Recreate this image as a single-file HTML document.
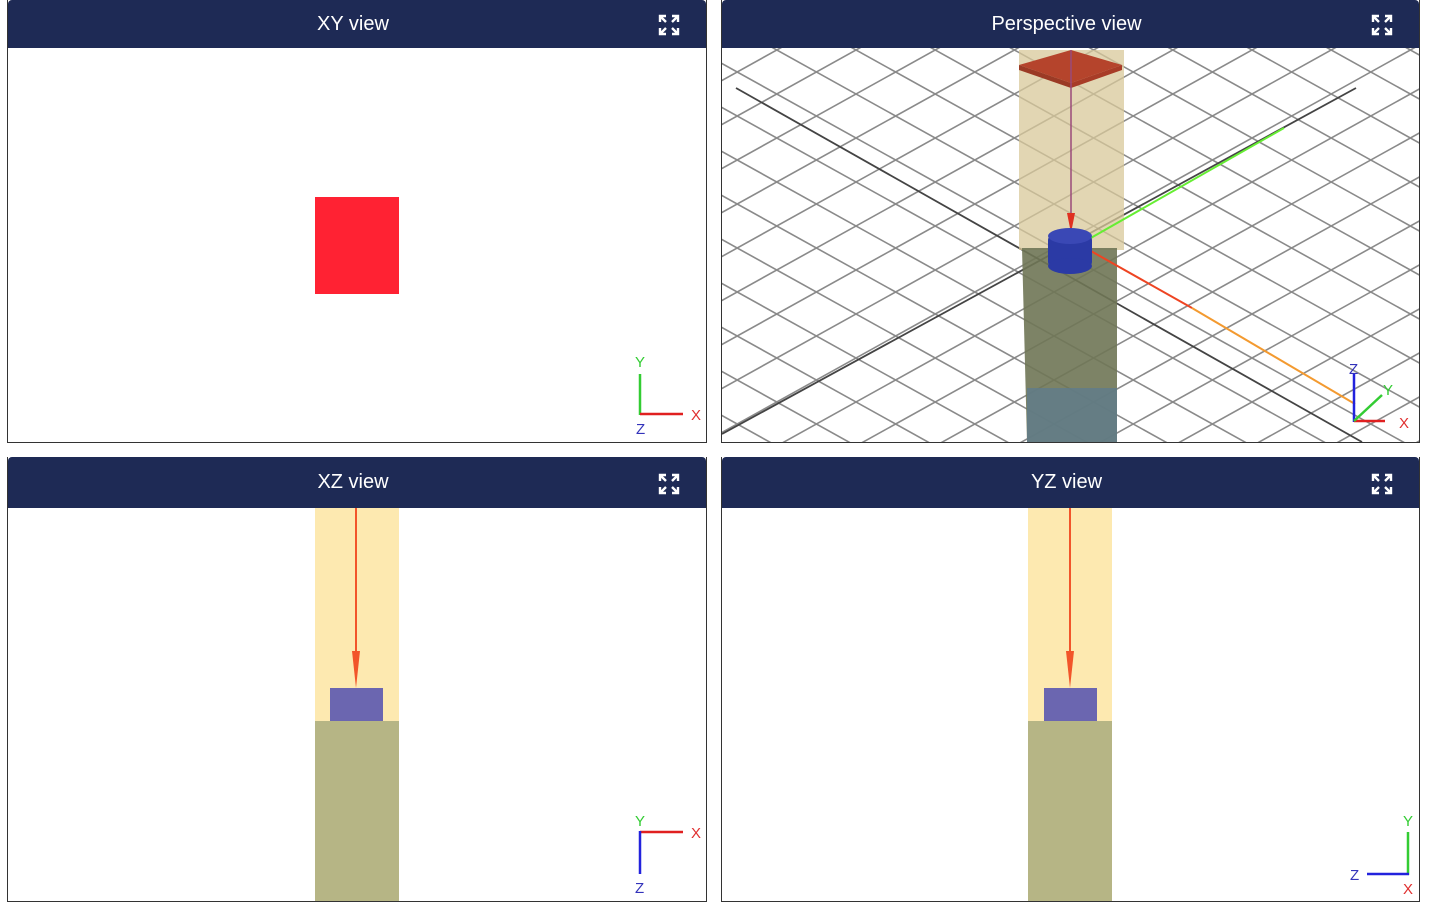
<!DOCTYPE html>
<html><head><meta charset="utf-8"><style>
html,body{margin:0;padding:0;background:#fff;width:1431px;height:906px;overflow:hidden;font-family:"Liberation Sans",sans-serif}
.p{position:absolute;border:1px solid #333;border-top:none;background:#fff;overflow:hidden;box-sizing:border-box}
.h{position:absolute;left:0;right:0;top:0;height:48px;background:#1e2a55;color:#fff;font-size:20px;text-align:center;line-height:48px;border-radius:4px 4px 0 0;padding-right:8px}
.ic{position:absolute;right:26px;top:14px}
svg.b{position:absolute;left:0}
</style></head><body>

<div class="p" style="left:7px;top:0;width:700px;height:443px">
<div class="h">XY view<svg class="ic" width="22" height="22" viewBox="0 0 22 22" fill="none" stroke="#fff" stroke-width="2.4"><path d="M2 8V2h6M2 2l6 6M14 2h6v6M20 2l-6 6M2 14v6h6M2 20l6-6M20 14v6h-6M20 20l-6-6"/></svg></div>
<svg class="b" style="top:48px" width="698" height="394">
<rect x="307" y="149" width="84" height="97" fill="#ff2233"/>
<line x1="632" y1="326" x2="632" y2="367" stroke="#33cc33" stroke-width="2.5"/>
<line x1="632" y1="366" x2="675" y2="366" stroke="#e02020" stroke-width="2.5"/>
<text x="627" y="319" font-size="15" fill="#33cc33">Y</text>
<text x="683" y="372" font-size="15" fill="#e03030">X</text>
<text x="628" y="386" font-size="15" fill="#3333bb">Z</text>
</svg></div>

<div class="p" style="left:721px;top:0;width:699px;height:443px">
<div class="h">Perspective view<svg class="ic" width="22" height="22" viewBox="0 0 22 22" fill="none" stroke="#fff" stroke-width="2.4"><path d="M2 8V2h6M2 2l6 6M14 2h6v6M20 2l-6 6M2 14v6h6M2 20l6-6M20 14v6h-6M20 20l-6-6"/></svg></div>
<svg class="b" style="top:48px" width="698" height="394">
<g id="grid" stroke="#8a8a8a" stroke-width="1.6"></g>
<line x1="14" y1="40" x2="640" y2="394" stroke="#444" stroke-width="1.8"/>
<line x1="0" y1="386" x2="634" y2="40" stroke="#444" stroke-width="1.8"/>
<rect x="297" y="2" width="105" height="200" fill="#d8c89a" opacity="0.75"/>
<polygon points="300,200 395,200 395,394 305,394" fill="#6f7655" opacity="0.9"/>
<rect x="305" y="340" width="90" height="54" fill="#5f7c8c" opacity="0.8"/>
<polygon points="297,17 349,2 400,17 349,35" fill="#b5442c"/>
<polygon points="297,17 349,35 349,40 297,22" fill="#9b3a25"/>
<polygon points="400,17 349,35 349,40 400,22" fill="#a83c27"/>
<line x1="349" y1="2" x2="349" y2="170" stroke="#9a4a7a" stroke-width="1.5"/>
<polygon points="345,165 353,165 349,185" fill="#e03020"/>
<line x1="360" y1="195" x2="562" y2="80" stroke="#66ee33" stroke-width="2"/>
<line x1="360" y1="198" x2="470" y2="260" stroke="#ee4422" stroke-width="2"/>
<line x1="470" y1="260" x2="633" y2="356" stroke="#f39a30" stroke-width="2"/>
<rect x="326" y="188" width="44" height="30" rx="4" fill="#2b3aa5"/>
<ellipse cx="348" cy="188" rx="22" ry="8" fill="#3a48b5"/>
<ellipse cx="348" cy="218" rx="22" ry="8" fill="#2b3aa5"/>
<line x1="632" y1="326" x2="632" y2="374" stroke="#2222dd" stroke-width="2.5"/>
<line x1="632" y1="373" x2="663" y2="373" stroke="#e02020" stroke-width="2.5"/>
<line x1="632" y1="373" x2="660" y2="347" stroke="#33cc33" stroke-width="2.5"/>
<text x="627" y="326" font-size="15" fill="#3333bb">Z</text>
<text x="661" y="347" font-size="15" fill="#33cc33">Y</text>
<text x="677" y="380" font-size="15" fill="#e03030">X</text>
</svg></div>

<div class="p" style="left:7px;top:457px;width:700px;height:445px">
<div class="h" style="height:51px;line-height:51px">XZ view<svg class="ic" style="top:16px" width="22" height="22" viewBox="0 0 22 22" fill="none" stroke="#fff" stroke-width="2.4"><path d="M2 8V2h6M2 2l6 6M14 2h6v6M20 2l-6 6M2 14v6h6M2 20l6-6M20 14v6h-6M20 20l-6-6"/></svg></div>
<svg class="b" style="top:51px" width="698" height="393">
<rect x="307" y="0" width="84" height="213" fill="#fde9b0"/>
<rect x="307" y="213" width="84" height="180" fill="#b6b585"/>
<rect x="322" y="180" width="53" height="33" fill="#6b66b0"/>
<line x1="348" y1="0" x2="348" y2="150" stroke="#f2552a" stroke-width="2"/>
<polygon points="344,143 352,143 348,180" fill="#f2552a"/>
<line x1="632" y1="324" x2="675" y2="324" stroke="#e02020" stroke-width="2.5"/>
<line x1="632" y1="323" x2="632" y2="366" stroke="#2222dd" stroke-width="2.5"/>
<text x="627" y="318" font-size="15" fill="#33cc33">Y</text>
<text x="683" y="330" font-size="15" fill="#e03030">X</text>
<text x="627" y="385" font-size="15" fill="#3333bb">Z</text>
</svg></div>

<div class="p" style="left:721px;top:457px;width:699px;height:445px">
<div class="h" style="height:51px;line-height:51px">YZ view<svg class="ic" style="top:16px" width="22" height="22" viewBox="0 0 22 22" fill="none" stroke="#fff" stroke-width="2.4"><path d="M2 8V2h6M2 2l6 6M14 2h6v6M20 2l-6 6M2 14v6h6M2 20l6-6M20 14v6h-6M20 20l-6-6"/></svg></div>
<svg class="b" style="top:51px" width="698" height="393">
<rect x="306" y="0" width="84" height="213" fill="#fde9b0"/>
<rect x="306" y="213" width="84" height="180" fill="#b6b585"/>
<rect x="322" y="180" width="53" height="33" fill="#6b66b0"/>
<line x1="348" y1="0" x2="348" y2="150" stroke="#f2552a" stroke-width="2"/>
<polygon points="344,143 352,143 348,180" fill="#f2552a"/>
<line x1="686" y1="324" x2="686" y2="367" stroke="#33cc33" stroke-width="2.5"/>
<line x1="645" y1="366" x2="687" y2="366" stroke="#2222dd" stroke-width="2.5"/>
<text x="681" y="318" font-size="15" fill="#33cc33">Y</text>
<text x="628" y="372" font-size="15" fill="#3333bb">Z</text>
<text x="681" y="386" font-size="15" fill="#e03030">X</text>
</svg></div>

<script>
(function(){
var g=document.getElementById('grid'),s='';
for(var i=-20;i<30;i++){
  var c=i*44;
  s+='<line x1="-100" y1="'+(c-40)+'" x2="800" y2="'+(c+460)+'"/>';
  s+='<line x1="-100" y1="'+(c+440)+'" x2="800" y2="'+(c-60)+'"/>';
}
g.innerHTML=s;
})();
</script>
</body></html>
